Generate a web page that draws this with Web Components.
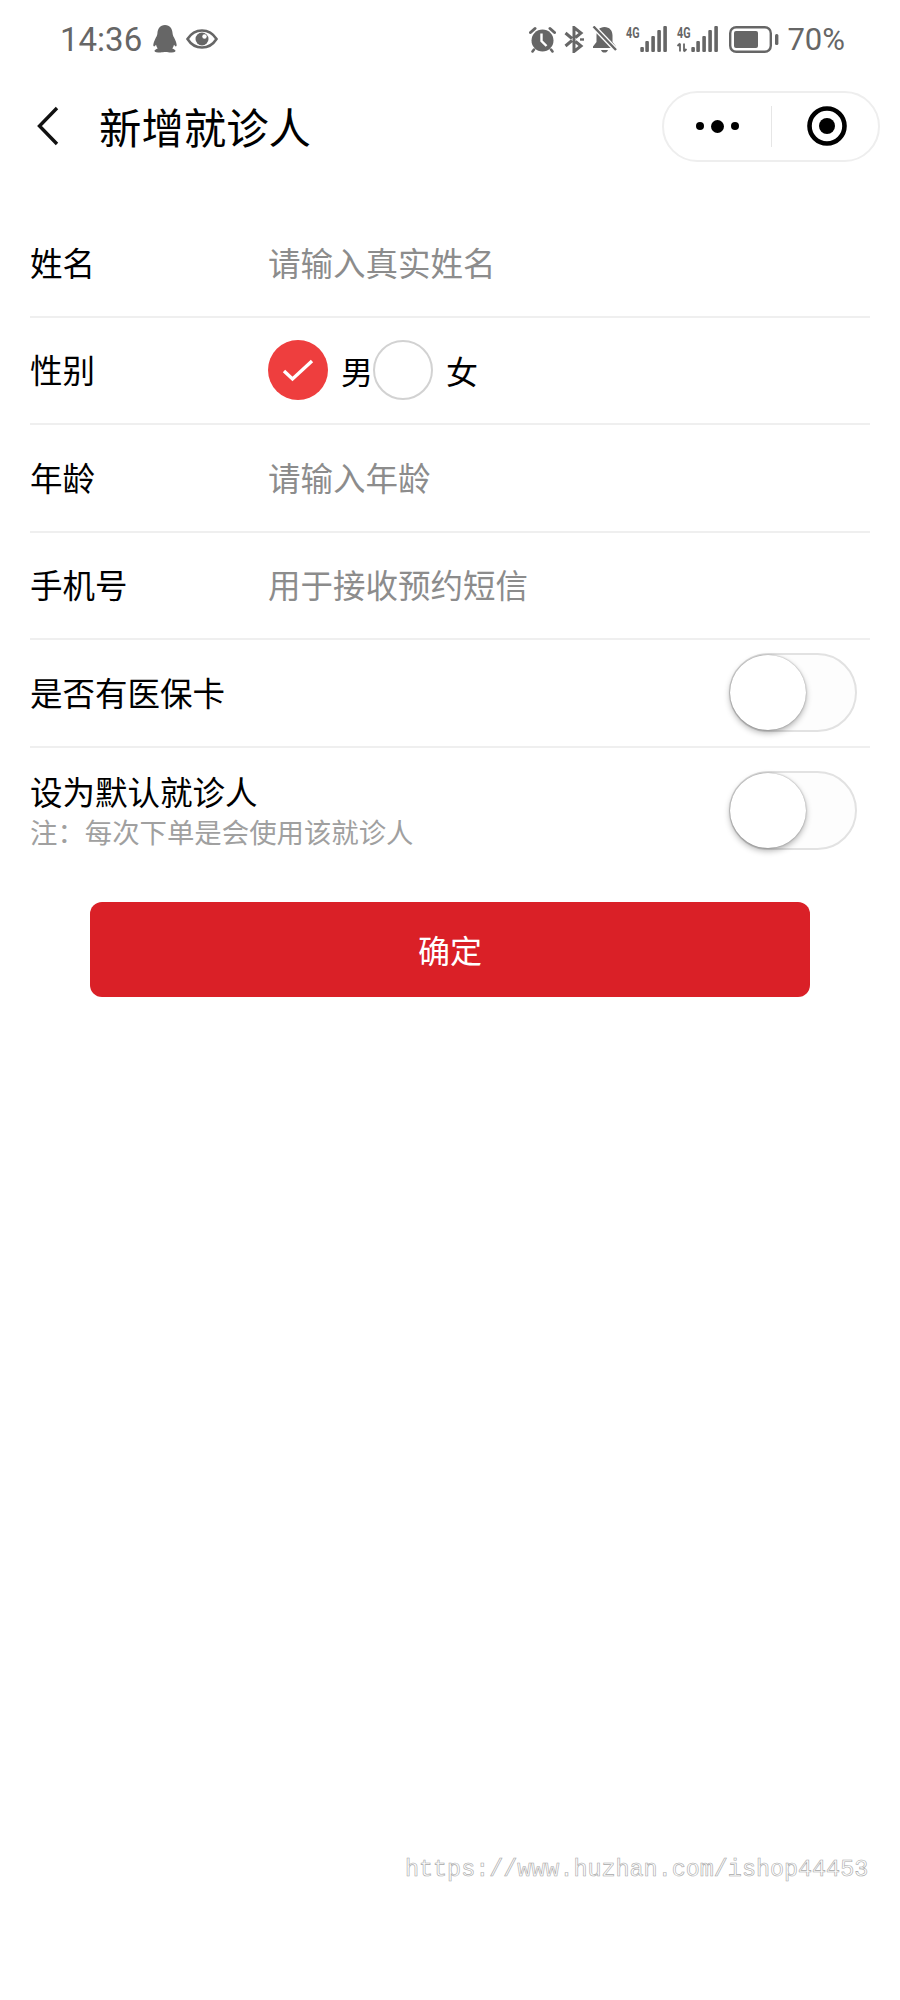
<!DOCTYPE html>
<html lang="zh-CN">
<head>
<meta charset="utf-8">
<title>新增就诊人</title>
<style>
  html, body { margin: 0; background: #fff; }
  body { font-family: "Noto Sans CJK SC", "Noto Sans", sans-serif; color: #000; }
</style>
</head>
<body>
<status-bar></status-bar>
<nav-bar>新增就诊人</nav-bar>
<patient-form>
  <form-row>
    <span slot="label">姓名</span>
    <text-field>请输入真实姓名</text-field>
  </form-row>
  <form-row>
    <span slot="label">性别</span>
    <gender-radio checked>男</gender-radio>
    <gender-radio>女</gender-radio>
  </form-row>
  <form-row>
    <span slot="label">年龄</span>
    <text-field>请输入年龄</text-field>
  </form-row>
  <form-row>
    <span slot="label">手机号</span>
    <text-field>用于接收预约短信</text-field>
  </form-row>
  <form-row>
    <span slot="label">是否有医保卡</span>
    <toggle-switch slot="end"></toggle-switch>
  </form-row>
  <form-row last note="注&#xFF1A;每次下单是会使用该就诊人">
    <span slot="label">设为默认就诊人</span>
    <toggle-switch slot="end"></toggle-switch>
  </form-row>
</patient-form>
<submit-button>确定</submit-button>
<water-mark>https://www.huzhan.com/ishop44453</water-mark>

<script>
  (function (customElements) {
    'use strict';

    function shadow(el, html) {
      el.attachShadow({mode: 'open'}).innerHTML = html;
    }

    // the five bars shared by both sim icons
    const bars = `
      <rect x="15.300" y="21" width="3.600" height="5" rx="1"/>
      <rect x="20.300" y="15" width="3.600" height="11" rx="1"/>
      <rect x="26.300" y="10" width="3.600" height="16" rx="1"/>
      <rect x="32.300" y="4" width="3.600" height="22" rx="1"/>
      <rect x="38.300" y="0" width="3.600" height="26" rx="1"/>`;
    const fourG = `<text transform="translate(1 12) scale(.72 1)">4G</text>`;

    class StatusBar extends HTMLElement {
      constructor() {
        super();
        shadow(this, `
          <style>
            :host { display: flex; justify-content: space-between; align-items: center; box-sizing: border-box; height: 60px; padding: 18px 55px 0 60px; color: #666; font: 400 33px/1 Roboto, "Noto Sans", sans-serif; }
            .group { display: flex; align-items: center; }
            .left svg:first-of-type { margin-left: 10px; }
            .left svg + svg { margin-left: 8px; }
            .right svg { margin-right: 8px; display: block; }
            .right svg.wide { margin-right: 10px; }
            .pct { font-size: 31px; }
            text { font: 700 15px Roboto, sans-serif; fill: #666; }
          </style>
          <div class="group left">
            <span class="clock">14:36</span>
            <svg width="26" height="28" viewBox="0 0 26 28" fill="#666">
              <path d="M13 0c5 0 7.400 4 7.600 8.500.1 2 1 3 2.400 6 1.500 3.300 2.200 6.200 1.200 6.800-.7.400-1.600-.5-2.200-1.500-.3 1.500-.9 2.700-1.700 3.600 1.800.7 3.300 1.500 3.200 2.500-.1 1.100-2.500 1.600-6 1.600-2 0-3.300-.4-4.500-.4s-2.500.4-4.500.4c-3.500 0-5.900-.5-6-1.600-.1-1 1.400-1.800 3.200-2.500-.8-.9-1.400-2.100-1.700-3.600-.6 1-1.500 1.900-2.200 1.500-1-.6-.3-3.500 1.200-6.800 1.400-3 2.300-4 2.400-6C5.600 4 8 0 13 0z"/>
            </svg>
            <svg width="32" height="20" viewBox="0 0 32 20">
              <path d="M1.500 10C5 4.500 10 1.500 16 1.500S27 4.500 30.500 10C27 15.500 22 18.500 16 18.500S5 15.500 1.500 10z" fill="none" stroke="#666" stroke-width="2.600"/>
              <circle cx="16" cy="10" r="6.500" fill="#666"/>
              <circle cx="18.500" cy="7.500" r="2.200" fill="#fff"/>
            </svg>
          </div>
          <div class="group right">
            <svg width="27" height="27" viewBox="0 0 27 27">
              <circle cx="13.500" cy="14.500" r="11" fill="#666"/>
              <path d="M1.500 6.500 6 2.500M25.500 6.500 21 2.500" stroke="#666" stroke-width="3" stroke-linecap="round"/>
              <path d="M5 23.500 3.500 25.500M22 23.500 23.500 25.500" stroke="#666" stroke-width="2.600" stroke-linecap="round"/>
              <path d="M12.500 7.500v7.500l5 5" fill="none" stroke="#fff" stroke-width="2.400"/>
            </svg>
            <svg width="20" height="27" viewBox="0 0 20 27" fill="none" stroke="#666" stroke-width="3">
              <path d="M1.500 7 8 12.500M11.500 15.500 17 20 10 25.500V1.500L17 7 11.500 11.500M8 14.500 1.500 20"/>
              <path d="M16 13.500H20" stroke-width="2.400"/>
            </svg>
            <svg width="25" height="27" viewBox="0 0 25 27">
              <path d="M12.500 1c5 0 8 3.500 8 8.500v6.500l3.500 4.500v1.500H1v-1.500l3.500-4.500V9.500C4.500 4.500 7.500 1 12.500 1z" fill="#666"/>
              <path d="M9 24h7c-.4 1.600-2 2.600-3.500 2.600S9.400 25.600 9 24z" fill="#666"/>
              <path d="M1.500 0.500 24 24" stroke="#fff" stroke-width="5"/>
              <path d="M1.500 0.500 24 24" stroke="#666" stroke-width="2.400"/>
            </svg>
            <svg width="43" height="33" viewBox="0 -3 43 33" fill="#666">
              ${bars}
              ${fourG}
            </svg>
            <svg class="wide" width="43" height="33" viewBox="0 -3 43 33" fill="#666">
              ${bars}
              ${fourG}
              <path d="M4 25.500v-8M1.500 20l2.500-2.500M8 17.500v8M8 25.500l2.500-2.500" stroke="#666" stroke-width="1.800" fill="none"/>
            </svg>
            <svg width="50" height="27" viewBox="0 0 50 27" fill="none">
              <rect x="1.200" y="1.200" width="40.600" height="24.600" rx="6" stroke="#666" stroke-width="2.400"/>
              <rect x="5" y="5" width="24" height="17" rx="2" fill="#666"/>
              <rect x="46" y="8" width="3.400" height="11" rx="1.500" fill="#666"/>
            </svg>
            <span class="pct">70%</span>
          </div>`);
      }
    }

    class NavBar extends HTMLElement {
      constructor() {
        super();
        shadow(this, `
          <style>
            :host { display: flex; align-items: center; height: 132px; padding: 0 20px 0 37px; }
            .back { display: block; flex: none; margin-right: 40px; }
            .title { flex: 1; font-size: 42.400px; line-height: 1; color: #000; }
            .capsule { flex: none; display: flex; align-items: center; box-sizing: border-box; width: 218px; height: 71px; border: 2px solid #eeeeee; border-radius: 36px; background: #fff; }
            .more { flex: none; display: flex; align-items: center; justify-content: center; gap: 7px; width: 108px; height: 41px; border-right: 1px solid #e6e6e6; box-sizing: border-box; }
            .more i { display: block; width: 8px; height: 8px; border-radius: 50%; background: #000; }
            .more i:nth-child(2) { width: 13px; height: 13px; }
            .home { flex: 1; display: flex; justify-content: center; padding-left: 3px; }
            .home svg { display: block; }
          </style>
          <svg class="back" width="22" height="40" viewBox="0 0 22 40" fill="none">
            <path d="M20 2 2.500 20 20 38" stroke="#111" stroke-width="3.400"/>
          </svg>
          <div class="title"><slot></slot></div>
          <div class="capsule">
            <div class="more"><i></i><i></i><i></i></div>
            <div class="home">
              <svg width="40" height="40" viewBox="0 0 40 40">
                <circle cx="20" cy="20" r="17.500" fill="none" stroke="#000" stroke-width="4.600"/>
                <circle cx="20" cy="20" r="8" fill="#000"/>
              </svg>
            </div>
          </div>`);
      }
    }

    class PatientForm extends HTMLElement {
      constructor() {
        super();
        shadow(this, `
          <style>
            :host { display: block; padding: 18px 30px 0; }
          </style>
          <slot></slot>`);
      }
    }

    class FormRow extends HTMLElement {
      constructor() {
        super();
        const note = this.getAttribute('note');
        shadow(this, `
          <style>
            :host { display: flex; align-items: center; box-sizing: border-box; height: 107.5px; padding-bottom: 2px; border-bottom: 2px solid #efefef; font-size: 32.500px; line-height: 38px; }
            :host([last]) { height: 124px; padding: 1px 0 0; border-bottom: 0; }
            .label { flex: none; width: 238px; }
            .text { flex: 1; }
            .body { display: flex; align-items: center; flex: 1; }
            .end { flex: none; padding: 2px 13px 0 0; display: flex; }
            .note { margin-top: 3px; font-size: 27.400px; line-height: 36px; color: #a0a0a0; white-space: nowrap; }
            :host([note]) .label { width: auto; }
            :host([last]) .end { padding-top: 0; }
            :host(:not([note])) .text { display: contents; }
            ::slotted(gender-radio) { margin-top: 2px; }
          </style>
          <div class="text">
            <div class="label"><slot name="label"></slot></div>
            ${note ? `<div class="note">${note}</div>` : ''}
          </div>
          <div class="body"><slot></slot></div>
          <div class="end"><slot name="end"></slot></div>`);
      }
    }

    class TextField extends HTMLElement {
      constructor() {
        super();
        shadow(this, `
          <style>
            :host { display: block; color: #8c8c8c; font-size: 32.500px; line-height: 38px; }
          </style>
          <slot></slot>`);
      }
    }

    class GenderRadio extends HTMLElement {
      constructor() {
        super();
        const tick = this.hasAttribute('checked')
          ? `<svg width="32" height="24" viewBox="0 0 32 24" fill="none"><path d="M2 13 10.500 21 30 3" stroke="#fff" stroke-width="3.400"/></svg>`
          : '';
        shadow(this, `
          <style>
            :host { display: flex; align-items: center; font-size: 32px; line-height: 38px; color: #000; }
            .dot { flex: none; display: flex; align-items: center; justify-content: center; box-sizing: border-box; width: 60px; height: 60px; border-radius: 50%; border: 2px solid #d2d2d2; background: #fff; margin-right: 13px; }
            :host([checked]) .dot { border: 0; background: #ee3e3e; }
          </style>
          <span class="dot">${tick}</span>
          <slot></slot>`);
      }
    }

    class ToggleSwitch extends HTMLElement {
      constructor() {
        super();
        shadow(this, `
          <style>
            :host { display: block; }
            .track { box-sizing: border-box; width: 128px; height: 79px; border: 2px solid #e2e2e2; border-radius: 40px; background: #fdfdfd; }
            .thumb { width: 76px; height: 75px; border-radius: 50%; background: #fff; margin-left: -1px; box-shadow: 0 3px 6px rgba(0, 0, 0, .3), 0 0 2px rgba(0, 0, 0, .35); }
          </style>
          <div class="track"><div class="thumb"></div></div>`);
      }
    }

    class SubmitButton extends HTMLElement {
      constructor() {
        super();
        shadow(this, `
          <style>
            :host { display: flex; align-items: center; justify-content: center; box-sizing: border-box; width: 720px; height: 95px; margin: 30px 0 0 90px; border-radius: 12px; background: #da2027; color: #fff; font-size: 32px; }
          </style>
          <slot></slot>`);
      }
    }

    class WaterMark extends HTMLElement {
      constructor() {
        super();
        shadow(this, `
          <style>
            :host { display: block; margin: 853px 0 0 405px; font: 400 23.400px/40px "Liberation Mono", monospace; color: #fff; -webkit-text-stroke: .6px #a8a8a8; white-space: nowrap; }
          </style>
          <slot></slot>`);
      }
    }

    customElements.define('status-bar', StatusBar);
    customElements.define('nav-bar', NavBar);
    customElements.define('patient-form', PatientForm);
    customElements.define('form-row', FormRow);
    customElements.define('text-field', TextField);
    customElements.define('gender-radio', GenderRadio);
    customElements.define('toggle-switch', ToggleSwitch);
    customElements.define('submit-button', SubmitButton);
    customElements.define('water-mark', WaterMark);
  })(window.customElements);
</script>
</body>
</html>
